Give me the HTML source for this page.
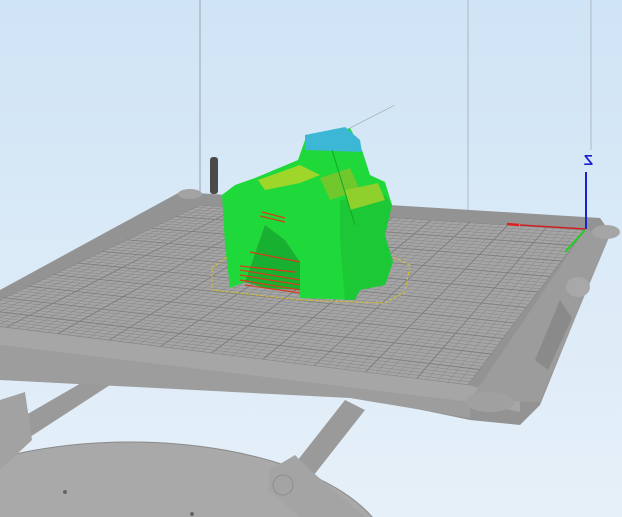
<!DOCTYPE html>
<html><head><meta charset="utf-8"><style>
html,body{margin:0;padding:0;width:622px;height:517px;overflow:hidden;background:#d6e8f6}
svg{display:block}
</style></head><body>
<svg id="s" width="622" height="517" viewBox="0 0 622 517" xmlns="http://www.w3.org/2000/svg">
<defs>
<linearGradient id="bg" x1="0" y1="0" x2="0" y2="1"><stop offset="0" stop-color="#cfe4f6"/><stop offset="1" stop-color="#e6f0f8"/></linearGradient>
<clipPath id="bedc"><polygon points="200,205 585,230 468,385 -45,321"/></clipPath>
</defs>
<rect width="622" height="517" fill="url(#bg)"/>
<line x1="200" y1="0" x2="200" y2="205" stroke="#9aa4ad" stroke-width="1"/>
<line x1="468" y1="0" x2="468" y2="385" stroke="#b0b8c0" stroke-width="1"/>
<line x1="591" y1="0" x2="591" y2="150" stroke="#b0b8c0" stroke-width="1"/>
<ellipse cx="130" cy="560" rx="260" ry="118" fill="#a9a9a9" stroke="#8a8a8a"/>
<circle cx="65" cy="492" r="2" fill="#666"/><circle cx="192" cy="514" r="2" fill="#666"/>
<polygon points="0,430 95,375 110,385 10,450" fill="#9a9a9a"/>
<polygon points="0,400 25,392 32,440 0,470" fill="#a2a2a2"/>
<polygon points="345,400 365,410 310,480 290,470" fill="#9a9a9a"/>
<polygon points="270,470 295,455 310,470 365,517 300,517 268,490" fill="#a4a4a4"/>
<circle cx="283" cy="485" r="10" fill="none" stroke="#8d8d8d"/>
<polygon points="180,192 600,218 610,232 540,405 520,425 470,420 350,395 0,375 0,290" fill="#939393"/>
<polygon points="0,327 468,385 520,398 520,412 470,402 0,345" fill="#a6a6a6"/>
<polygon points="0,345 470,402 470,418 350,398 0,380" fill="#9d9d9d"/>
<polygon points="585,230 610,235 540,402 470,400" fill="#9c9c9c"/>
<polygon points="560,300 572,318 548,370 535,360" fill="#8a8a8a"/>
<ellipse cx="190" cy="194" rx="12" ry="5" fill="#a3a3a3"/>
<ellipse cx="606" cy="232" rx="14" ry="7" fill="#a5a5a5"/>
<ellipse cx="578" cy="287" rx="12" ry="10" fill="#a8a8a8"/>
<ellipse cx="490" cy="402" rx="24" ry="10" fill="#a0a0a0"/>
<polygon points="200,205 585,230 468,385 -45,321" fill="#a5a5a5"/>
<g id="grid" clip-path="url(#bedc)" stroke="#7d7d7d" stroke-width="0.5"></g>
<polygon points="212,268 225,258 395,258 410,265 405,292 385,303 300,300 212,290" fill="none" stroke="#d8c020" stroke-width="1" stroke-dasharray="3,2"/>
<rect x="210" y="157" width="8" height="37" rx="3" fill="#4a4a4a"/>
<polygon points="305,140 350,128 362,150 370,175 385,182 392,205 385,235 393,262 385,285 360,290 355,300 300,298 300,262 285,240 265,225 245,282 230,288 225,245 222,195 235,185 255,178 298,160" fill="#1fd83a"/>
<polygon points="340,200 385,195 392,205 385,235 393,262 385,285 360,290 355,300 345,300 340,240" fill="#1cc836"/>
<polygon points="305,135 345,127 360,140 362,152 305,150" fill="#3cb8d6"/>
<polygon points="258,180 300,165 320,175 300,183 265,190" fill="#9fd62a"/>
<polygon points="320,178 350,168 360,190 330,200" fill="#70c82c"/>
<polygon points="345,190 378,183 385,200 350,210" fill="#8fd02c"/>
<polygon points="245,282 265,225 285,240 300,262 300,290 265,288" fill="#18b030"/>
<g stroke="#d83a1a" stroke-width="1.2">
<line x1="262" y1="212" x2="285" y2="218"/><line x1="260" y1="216" x2="285" y2="222"/>
<line x1="250" y1="252" x2="300" y2="262"/>
<line x1="240" y1="270" x2="300" y2="280"/><line x1="240" y1="275" x2="300" y2="285"/><line x1="240" y1="280" x2="300" y2="290"/><line x1="245" y1="285" x2="300" y2="293"/>
<line x1="240" y1="266" x2="295" y2="272"/>
</g>
<line x1="332" y1="150" x2="355" y2="225" stroke="#10a828" stroke-width="1"/>
<line x1="586" y1="172" x2="586" y2="229" stroke="#1a22d0" stroke-width="2"/>
<text x="0" y="0" font-family="Liberation Sans,sans-serif" font-size="15" font-weight="bold" fill="#1a22d0" transform="translate(593,165) scale(-1,1)">Z</text>
<line x1="520" y1="225" x2="585" y2="229" stroke="#d02020" stroke-width="1.5"/>
<line x1="507" y1="224" x2="519" y2="225" stroke="#e02020" stroke-width="2.5"/>
<line x1="585" y1="230" x2="565" y2="252" stroke="#20d020" stroke-width="2"/>
<line x1="350" y1="128" x2="395" y2="105" stroke="#9aa" stroke-width="0.7"/>
</svg>
<script>
(function(){
var g=document.getElementById('grid');var A=[200,205],B=[585,230],C=[468,385],D=[-45,321];
function L(p,q,t){return[p[0]+(q[0]-p[0])*t,p[1]+(q[1]-p[1])*t];}
var s='';var N=50;
for(var i=0;i<=N;i++){var t=i/N;var w=(i%5==0)?0.9:0.4;
var p=L(A,B,t),q=L(D,C,t);s+='<line x1="'+p[0]+'" y1="'+p[1]+'" x2="'+q[0]+'" y2="'+q[1]+'" stroke-width="'+w+'"/>';
p=L(A,D,t);q=L(B,C,t);s+='<line x1="'+p[0]+'" y1="'+p[1]+'" x2="'+q[0]+'" y2="'+q[1]+'" stroke-width="'+w+'"/>';}
g.innerHTML=s;})();
</script>
</body></html>
